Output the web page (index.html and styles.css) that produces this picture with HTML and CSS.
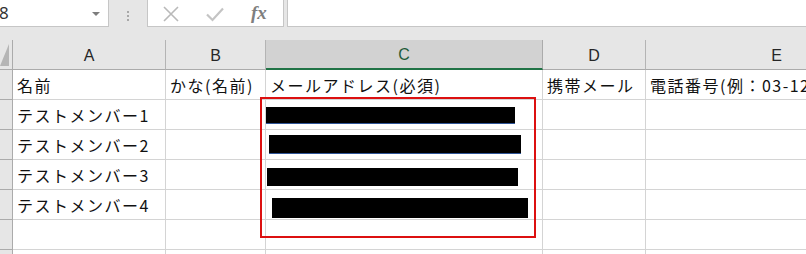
FILE: index.html
```html
<!DOCTYPE html>
<html lang="ja">
  <head>
    <meta charset="UTF-8" />
    <meta name="viewport" content="width=device-width, initial-scale=1.0" />
    <title>名簿</title>
    <link rel="stylesheet" href="styles.css">
  </head>
  <body>
    <div class="formula-bar">
      <div class="name-box">
        <span class="name-text">8</span>
        <span class="name-arrow"></span>
      </div>
      <div class="grip"><i></i><i></i><i></i></div>
      <div class="fx-buttons">
        <svg class="fx-btn cancel" width="16" height="16" viewBox="0 0 16 16">
          <path d="M1 1 L15 15 M15 1 L1 15" stroke="#b9b9b9" stroke-width="1.6" fill="none" />
        </svg>
        <svg class="fx-btn enter" width="18" height="15" viewBox="0 0 18 15">
          <path d="M1 7.5 L6.5 13 L17 1.5" stroke="#c4c4c4" stroke-width="2.2" fill="none" />
        </svg>
        <span class="fx"><i>fx</i></span>
      </div>
      <div class="formula-input"></div>
    </div>

    <div class="sheet">
      <!-- column headers -->
      <div class="corner"><span class="corner-tri"></span></div>
      <div class="col-head">A</div>
      <div class="col-head">B</div>
      <div class="col-head selected">C</div>
      <div class="col-head">D</div>
      <div class="col-head">E</div>

      <div class="row-head"></div>
      <div class="cell">名前</div>
      <div class="cell">かな(名前)</div>
      <div class="cell">メールアドレス(必須)</div>
      <div class="cell">携帯メール</div>
      <div class="cell">電話番号(例：03-1234-5678)</div>

      <div class="row-head"></div>
      <div class="cell">テストメンバー1</div>
      <div class="cell"></div>
      <div class="cell"></div>
      <div class="cell"></div>
      <div class="cell"></div>

      <div class="row-head"></div>
      <div class="cell">テストメンバー2</div>
      <div class="cell"></div>
      <div class="cell"></div>
      <div class="cell"></div>
      <div class="cell"></div>

      <div class="row-head"></div>
      <div class="cell">テストメンバー3</div>
      <div class="cell"></div>
      <div class="cell"></div>
      <div class="cell"></div>
      <div class="cell"></div>

      <div class="row-head"></div>
      <div class="cell">テストメンバー4</div>
      <div class="cell"></div>
      <div class="cell"></div>
      <div class="cell"></div>
      <div class="cell"></div>

      <div class="row-head"></div>
      <div class="cell"></div>
      <div class="cell"></div>
      <div class="cell"></div>
      <div class="cell"></div>
      <div class="cell"></div>

      <div class="row-head"></div>
      <div class="cell"></div>
      <div class="cell"></div>
      <div class="cell"></div>
      <div class="cell"></div>
      <div class="cell"></div>

      <!-- redacted addresses -->
      <div class="redact r1"></div>
      <div class="redact r2"></div>
      <div class="redact r3"></div>
      <div class="redact r4"></div>
      <div class="highlight"></div>
    </div>
  </body>
</html>
```

FILE: styles.css
```css
body {
  margin: 0;
  width: 806px;
  height: 254px;
  overflow: hidden;
  background-color: #e6e6e6;
  font-family: "Noto Sans CJK JP", "Noto Sans", sans-serif;
}

/* formula bar */
.formula-bar {
  display: flex;
  align-items: flex-start;
  height: 40px;
}

.name-box {
  box-sizing: border-box;
  width: 109px;
  height: 27px;
  background: white;
  border: 1px solid #c6c6c6;
  border-top: none;
  border-left: none;
  display: flex;
  align-items: center;
  justify-content: space-between;
  padding: 0 8px 0 0;
}

.name-text {
  font-family: "Noto Sans", sans-serif;
  font-size: 17px;
  color: #333;
  margin-left: -1px;
  margin-top: -1px;
}

.name-arrow {
  width: 0;
  height: 0;
  border-left: 4px solid transparent;
  border-right: 4px solid transparent;
  border-top: 4px solid #7d7d7d;
  margin-top: 2px;
}

.grip {
  width: 38px;
  height: 27px;
  display: flex;
  flex-direction: column;
  align-items: center;
  justify-content: center;
  gap: 2px;
  padding-top: 5px;
  box-sizing: border-box;
}

.grip i {
  width: 2px;
  height: 2px;
  background: #a8a8a8;
}

.fx-buttons {
  box-sizing: border-box;
  width: 137px;
  height: 27px;
  background: white;
  border: 1px solid #c6c6c6;
  border-top: none;
  display: flex;
  align-items: center;
  padding-left: 15px;
}

.cancel {
  margin-right: 27px;
  margin-top: 1px;
}

.enter {
  margin-right: 27px;
  margin-top: 2px;
}

.fx {
  font-family: "Liberation Serif", serif;
  font-size: 19px;
  font-weight: bold;
  color: #7f7f7f;
}

.formula-input {
  box-sizing: border-box;
  flex: 1;
  height: 27px;
  margin-left: 3px;
  background: white;
  border: 1px solid #c6c6c6;
  border-top: none;
  border-right: none;
}

/* grid */
.sheet {
  position: relative;
  display: grid;
  grid-template-columns: 13px 153px 100px 277px 103px 262px;
  grid-auto-rows: 30px;
  width: 908px;
}

.sheet > div {
  box-sizing: border-box;
}

.corner {
  position: relative;
  background: #e6e6e6;
  border-right: 1px solid #ababab;
  border-bottom: 1px solid #ababab;
}

.corner-tri {
  position: absolute;
  right: 3px;
  bottom: 3px;
  width: 9px;
  height: 22px;
  background: #b5b5b5;
  clip-path: polygon(100% 0, 100% 100%, 0 100%);
}

.col-head {
  display: flex;
  align-items: center;
  justify-content: center;
  background: #e6e6e6;
  border-right: 1px solid #b4b4b4;
  border-bottom: 1px solid #ababab;
  font-family: "Liberation Sans", sans-serif;
  font-size: 16px;
  color: #262626;
  padding-top: 2px;
}

.col-head.selected {
  background: #d2d2d2;
  color: #1e5c3a;
  border-bottom: 2px solid #217346;
  border-right-color: #ababab;
}

.row-head {
  background: #e6e6e6;
  border-right: 1px solid #ababab;
  border-bottom: 1px solid #ababab;
}

.cell {
  display: flex;
  align-items: center;
  background: white;
  border-right: 1px solid #d4d4d4;
  border-bottom: 1px solid #d4d4d4;
  padding-left: 4px;
  font-size: 16px;
  letter-spacing: 1.5px;
  color: #111;
  white-space: nowrap;
  overflow: hidden;
}

/* overlays */
.redact {
  position: absolute;
  background: black;
}

.r1 {
  left: 266px;
  top: 67px;
  width: 249px;
  height: 16px;
  box-shadow: 0 1px 0 #2f5597;
}

.r2 {
  left: 269px;
  top: 95px;
  width: 252px;
  height: 18px;
  box-shadow: 0 1px 0 #2f5597;
}

.r3 {
  left: 267px;
  top: 128px;
  width: 251px;
  height: 18px;
}

.r4 {
  left: 272px;
  top: 158px;
  width: 256px;
  height: 20px;
}

.highlight {
  position: absolute;
  left: 260px;
  top: 57px;
  width: 276px;
  height: 141px;
  border: 2px solid #dc1010;
}
```
